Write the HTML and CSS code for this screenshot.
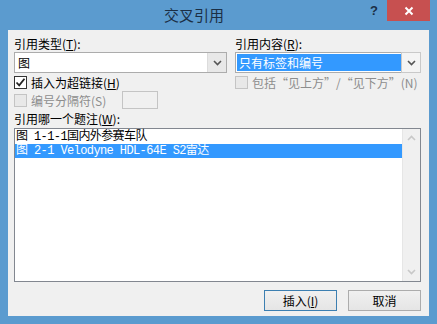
FILE: index.html
```html
<!DOCTYPE html>
<html lang="zh-CN">
<head>
    <meta charset="UTF-8">
    <title>交叉引用</title>
    <link rel="stylesheet" href="styles.css">
</head>
<body>
<div class="window">
    <div class="titlebar">
        <div class="title">交叉引用</div>
        <div class="help">?</div>
        <div class="close">
            <svg width="10" height="10" viewBox="0 0 10 10"><path d="M1.5 1.5 L8.5 8.5 M8.5 1.5 L1.5 8.5" stroke="#fff" stroke-width="2"/></svg>
        </div>
    </div>
    <div class="content">
        <div class="top">
            <div class="col left">
                <div class="label">引用类型(<u>T</u>):</div>
                <div class="combo">
                    <div class="combo-text">图</div>
                    <div class="combo-btn gray">
                        <svg width="9" height="6" viewBox="0 0 9 6"><path d="M1 1 L4.5 4.5 L8 1" fill="none" stroke="#555" stroke-width="1.6"/></svg>
                    </div>
                </div>
                <div class="check-row">
                    <span class="box checked">
                        <svg width="11" height="11" viewBox="0 0 11 11"><path d="M1.5 5.5 L4.2 8.3 L9.5 1.8" fill="none" stroke="#222" stroke-width="1.8"/></svg>
                    </span>
                    <span>插入为超链接(<u>H</u>)</span>
                </div>
                <div class="check-row disabled">
                    <span class="box"></span>
                    <span>编号分隔符(S)</span>
                    <span class="sep-input"></span>
                </div>
            </div>
            <div class="col right">
                <div class="label">引用内容(<u>R</u>):</div>
                <div class="combo">
                    <div class="combo-text"><span class="hl">只有标签和编号</span></div>
                    <div class="combo-btn white">
                        <svg width="9" height="6" viewBox="0 0 9 6"><path d="M1 1 L4.5 4.5 L8 1" fill="none" stroke="#555" stroke-width="1.6"/></svg>
                    </div>
                </div>
                <div class="check-row disabled">
                    <span class="box"></span>
                    <span>包括“见上方”/“见下方”(N)</span>
                </div>
            </div>
        </div>
        <div class="label list-label">引用哪一个题注(<u>W</u>):</div>
        <div class="listbox">
            <div class="items">
                <div class="item">图 1-1-1国内外参赛车队</div>
                <div class="item selected">图 2-1 Velodyne HDL-64E S2雷达</div>
            </div>
            <div class="scrollbar">
                <svg width="9" height="6" viewBox="0 0 9 6"><path d="M1 5 L4.5 1.5 L8 5" fill="none" stroke="#c8c8c8" stroke-width="1.6"/></svg>
                <svg width="9" height="6" viewBox="0 0 9 6"><path d="M1 1 L4.5 4.5 L8 1" fill="none" stroke="#c8c8c8" stroke-width="1.6"/></svg>
            </div>
        </div>
        <div class="buttons">
            <div class="btn default">插入(<u>I</u>)</div>
            <div class="btn">取消</div>
        </div>
    </div>
</div>
</body>
</html>
```

FILE: styles.css
```css
body {
    margin: 0;
    background-color: #5b9bcf;
    font-family: "Noto Sans CJK SC", "Liberation Sans", sans-serif;
    font-size: 12px;
    color: #000;
}
.window {
    width: 437px;
    height: 324px;
    box-sizing: border-box;
    padding: 0 8px 8px 8px;
    background-color: #5b9bcf;
    display: flex;
    flex-direction: column;
}
.titlebar {
    height: 30px;
    display: flex;
    align-items: flex-start;
}
.title {
    flex: 1;
    text-align: center;
    font-size: 15px;
    line-height: 30px;
    color: #1b2f45;
    padding-left: 10px;
}
.help {
    width: 17px;
    margin-top: 2px;
    font-family: "Liberation Sans", sans-serif;
    font-weight: bold;
    font-size: 13px;
    color: #1b2f45;
    line-height: 18px;
}
.close {
    width: 43px;
    height: 21px;
    margin-right: -1px;
    background-color: #c75050;
    display: flex;
    align-items: center;
    justify-content: center;
}
.content {
    flex: 1;
    background-color: #f0f0f0;
    padding: 6px 8px 0 6px;
    display: flex;
    flex-direction: column;
}
.top {
    display: flex;
    gap: 8px;
}
.col {
    display: flex;
    flex-direction: column;
}
.left {
    width: 213px;
}
.right {
    width: 186px;
}
.label {
    height: 16px;
    line-height: 16px;
}
.combo {
    display: flex;
    height: 21px;
    box-sizing: border-box;
    border: 1px solid #acacac;
    background-color: #fff;
}
.combo-text {
    flex: 1;
    padding: 1px 2px 0 3px;
    line-height: 17px;
}
.right .combo-text {
    padding: 1px 0 1px 1px;
    line-height: 17px;
}
.hl {
    display: block;
    background-color: #3399ff;
    color: #fff;
    padding-left: 2px;
}
.combo-btn {
    width: 18px;
    display: flex;
    align-items: center;
    justify-content: center;
}
.combo-btn.gray {
    background-color: #e8e8e8;
    border-left: 1px solid #dcdcdc;
}
.combo-btn.white {
    background-color: #f4f4f4;
    border: 1px solid #c9c9c9;
    margin: -1px -1px -1px 0;
}
.check-row {
    display: flex;
    align-items: center;
    height: 18px;
    gap: 4px;
}
.box {
    width: 11px;
    height: 11px;
    border: 1px solid #333;
    background-color: #fff;
    display: flex;
    align-items: center;
    justify-content: center;
}
.disabled {
    color: #8d8d8d;
}
.disabled .box {
    border-color: #c4c4c4;
    background-color: #e8e8e8;
}
.sep-input {
    width: 34px;
    height: 16px;
    border: 1px solid #c4c4c4;
    background-color: #f0f0f0;
    margin-left: 12px;
}
.list-label {
    margin-top: 2px;
}
.listbox {
    height: 154px;
    box-sizing: border-box;
    border: 1px solid #828790;
    background-color: #fff;
    display: flex;
    margin-top: 1px;
}
.items {
    flex: 1;
    padding-top: 1px;
}
.item {
    height: 14px;
    line-height: 14px;
    padding-left: 1px;
    font-family: "Liberation Mono", "Noto Sans CJK SC", monospace;
    letter-spacing: -0.6px;
}
.item.selected {
    background-color: #3399ff;
    color: #fff;
}
.scrollbar {
    width: 17px;
    background-color: #f0f0f0;
    border-left: 1px solid #e6e6e6;
    display: flex;
    flex-direction: column;
    align-items: center;
    justify-content: space-between;
    padding: 6px 0 6px 0;
}
.buttons {
    display: flex;
    justify-content: flex-end;
    gap: 11px;
    margin-top: 8px;
}
.btn {
    width: 73px;
    height: 21px;
    box-sizing: border-box;
    border: 1px solid #acacac;
    background: linear-gradient(#f0f0f0, #e5e5e5);
    text-align: center;
    line-height: 19px;
}
.btn.default {
    border-color: #3c7fb1;
}
```
